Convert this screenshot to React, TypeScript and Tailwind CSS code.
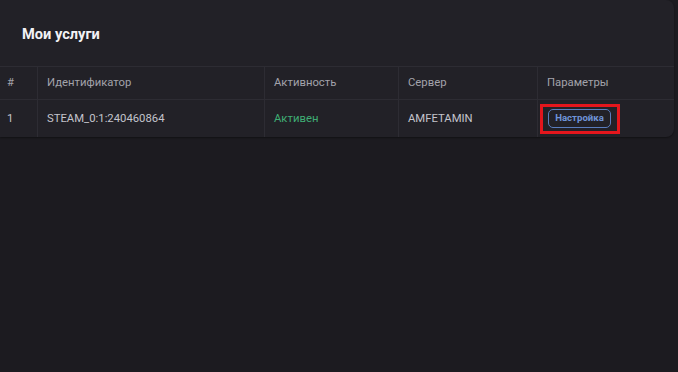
import React from "react";

export default function App() {
  const font = { fontFamily: "Roboto, 'Noto Sans', sans-serif" };
  return (
    <div className="w-[678px] h-[372px] bg-[#1c1b20] overflow-hidden" style={font}>
      <div className="w-[674px] bg-[#222127] rounded-r-lg shadow-[0_1px_2px_rgba(0,0,0,0.4)]">
        <div className="h-[66px] flex items-center pl-[22px] pt-[3px]">
          <h1 className="text-[14.6px] font-bold text-[#f2f2f5]">Мои услуги</h1>
        </div>
        <div className="grid grid-cols-[38px_227px_134px_139px_1fr] text-[11.3px]">
          <div className="h-[33px] flex items-center pl-[7px] pt-[1px] border-t border-r border-[#2d2c33] text-[#a3a3ab]">#</div>
          <div className="h-[33px] flex items-center pl-[9px] pt-[1px] border-t border-r border-[#2d2c33] text-[#a3a3ab]">Идентификатор</div>
          <div className="h-[33px] flex items-center pl-[9px] pt-[1px] border-t border-r border-[#2d2c33] text-[#a3a3ab]">Активность</div>
          <div className="h-[33px] flex items-center pl-[9px] pt-[1px] border-t border-r border-[#2d2c33] text-[#a3a3ab]">Сервер</div>
          <div className="h-[33px] flex items-center pl-[9px] pt-[1px] border-t border-[#2d2c33] text-[#a3a3ab]">Параметры</div>

          <div className="h-[38px] flex items-center pl-[7px] pt-[2px] border-t border-r border-[#2d2c33] text-[#c4c4cc]">1</div>
          <div className="h-[38px] flex items-center pl-[9px] pt-[2px] border-t border-r border-[#2d2c33] text-[#c4c4cc]">STEAM_0:1:240460864</div>
          <div className="h-[38px] flex items-center pl-[9px] pt-[2px] border-t border-r border-[#2d2c33] text-[#3fae74]">Активен</div>
          <div className="h-[38px] flex items-center pl-[9px] pt-[2px] border-t border-r border-[#2d2c33] text-[#c4c4cc]">AMFETAMIN</div>
          <div className="h-[38px] flex items-center pl-[2px] border-t border-[#2d2c33]">
            <div className="border-[3px] border-[#e3161c] pl-[5px] pr-[6px] pt-[2px] pb-[3px] mt-[1px]">
              <button className="h-[19px] w-[63px] flex items-center justify-center rounded-[5px] border-[1.5px] border-[#5a7dbd] text-[9.6px] font-bold text-[#6f93d8]">
                Настройка
              </button>
            </div>
          </div>
        </div>
      </div>
    </div>
  );
}
